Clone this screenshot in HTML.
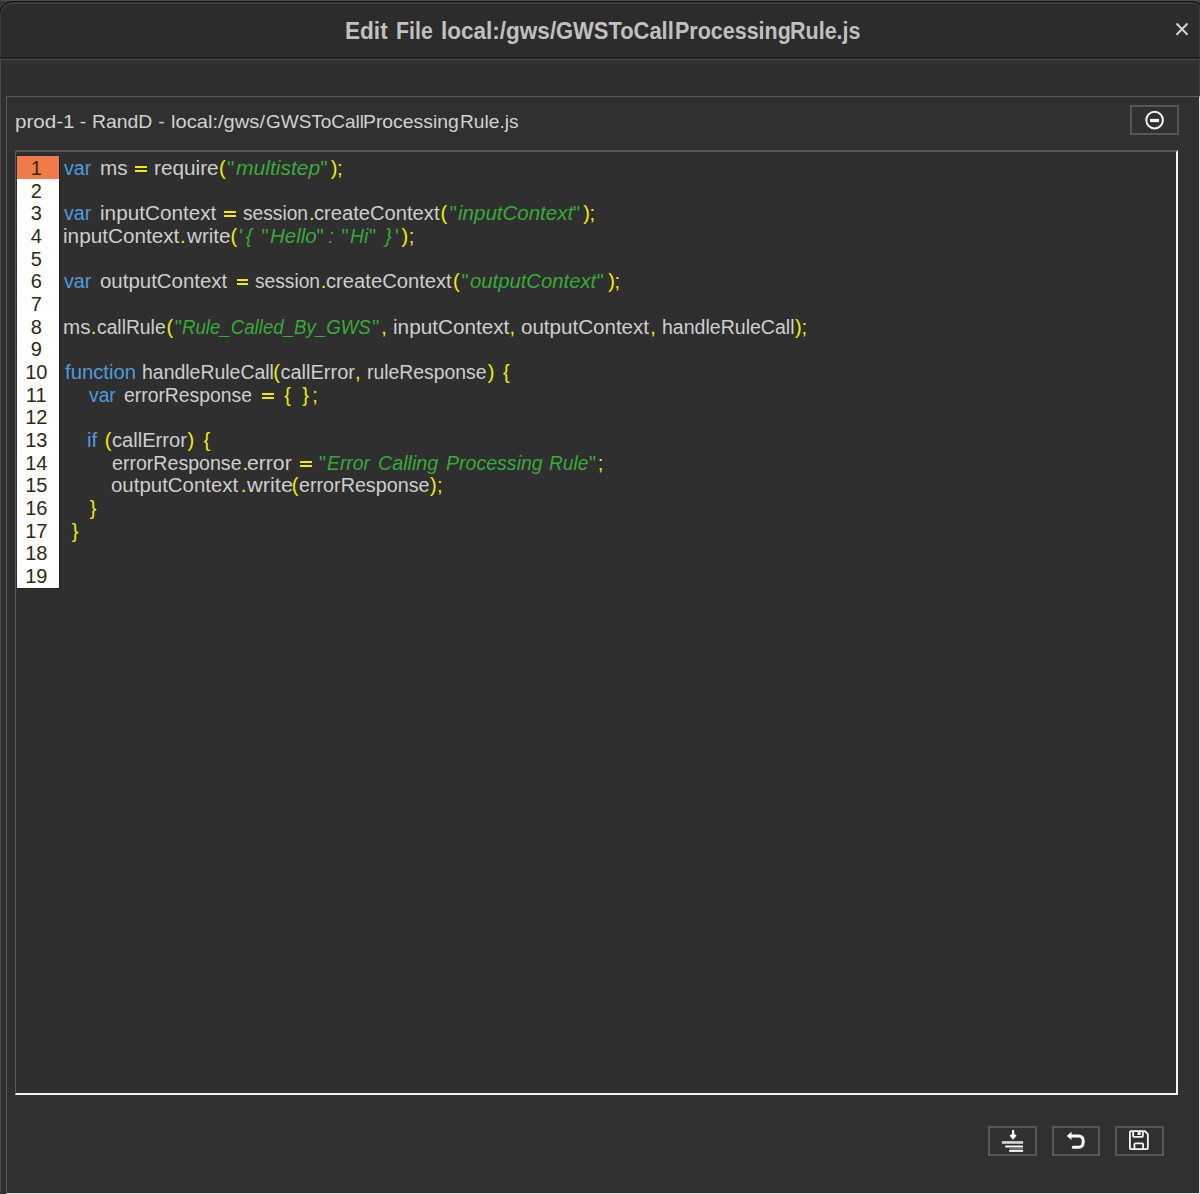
<!DOCTYPE html>
<html><head><meta charset="utf-8">
<style>
html,body{margin:0;padding:0;}
body{width:1200px;height:1194px;overflow:hidden;position:relative;background:#2f2f2f;font-family:"Liberation Sans",sans-serif;}
.abs{position:absolute;}
#cornerfill{left:0;top:0;width:1200px;height:20px;background:#393939;}
#top0{left:0;top:0;width:1200px;height:1px;background:#4c4c4c;}
#win{left:-1px;top:1px;width:1206px;height:1300px;box-sizing:border-box;border:1px solid #0a0a0a;border-radius:13.5px;background:#2c2c2c;box-shadow:inset 1px 2px 0 #3a3a3a;}
#frameL{left:0;top:59px;width:1px;height:1133px;background:#4a4a4a;}
#tb1{left:0;top:57px;width:1200px;height:1px;background:#1c1c1c;}
#tb2{left:0;top:58px;width:1200px;height:1px;background:#2a2a2a;}
#tb3{left:0;top:59px;width:1200px;height:1px;background:#444;}
#tb4{left:0;top:60px;width:1200px;height:1px;background:#363636;}
#toolbar{left:1px;top:61px;width:1199px;height:1133px;background:#2f2f2f;}
#panel{left:6px;top:96px;width:1194px;height:1098px;background:#303030;box-sizing:border-box;border-left:1px solid #5a5a5a;border-top:1px solid #5a5a5a;border-right:1px solid #e0e0e0;border-bottom:1px solid #e0e0e0;}
.btn{box-sizing:border-box;border:2px solid #575757;}
#editor{left:15px;top:150px;width:1163px;height:945px;box-sizing:border-box;border-left:1px solid #5a5a5a;border-top:2px solid #555;border-right:2px solid #f4f4f4;border-bottom:2px solid #f4f4f4;background:#2f2f2f;}
#gutter{left:17px;top:156px;width:42px;height:432px;background:#fff;box-shadow:1px 1px 0 #1f1f1f;}
#gdark{left:17px;top:155px;width:42px;height:1px;background:#1d2a30;}
#hl{left:17px;top:156px;width:42px;height:23px;background:#f07a48;}
.ln{position:absolute;left:17px;width:38.5px;text-align:center;font-size:20px;color:#2e2a10;line-height:40px;}
.tt{position:absolute;font-size:23.3px;font-weight:bold;line-height:50px;white-space:pre;transform-origin:0 0;color:#c0c0c0;}
.ht{position:absolute;font-size:19px;line-height:50px;white-space:pre;transform-origin:0 0;color:#d2d2d2;}
.t{position:absolute;font-size:20px;line-height:40px;white-space:pre;transform-origin:0 0;color:#cecece;}
.eq{position:absolute;height:6px;box-sizing:border-box;border-top:2px solid #f0ee00;border-bottom:2px solid #f0ee00;}
.k{color:#4f9bdc;}
.p{color:#f0ee00;}
.s{color:#38aa38;}
.si{color:#38aa38;font-style:italic;}
</style></head><body>
<div id="cornerfill" class="abs"></div>
<div id="top0" class="abs"></div>
<div id="win" class="abs"></div>
<div id="titlewrap"><span class="tt" style="left:344.83px;top:6px;transform:scaleX(0.9698)">Edit</span><span class="tt" style="left:395.78px;top:6px;transform:scaleX(0.9179)">File</span><span class="tt" style="left:440.73px;top:6px;transform:scaleX(0.9669)">local:/gws/</span><span class="tt" style="left:555.76px;top:6px;transform:scaleX(0.9415)">GWSToCall</span><span class="tt" style="left:674.88px;top:6px;transform:scaleX(0.9220)">Processing</span><span class="tt" style="left:789.88px;top:6px;transform:scaleX(0.9227)">Rule.js</span></div>
<svg class="abs" style="left:1170px;top:17px" width="24" height="24" viewBox="0 0 24 24"><path d="M6.5 6.5 L17.5 17.8 M17.5 6.5 L6.5 17.8" stroke="#d4d4d4" stroke-width="2" fill="none"/></svg>
<div id="tb1" class="abs"></div>
<div id="tb2" class="abs"></div>
<div id="tb3" class="abs"></div>
<div id="tb4" class="abs"></div>
<div id="toolbar" class="abs"></div>
<div id="frameL" class="abs"></div>
<div class="abs" style="left:1199px;top:6px;width:1px;height:51px;background:#3d3d3d"></div>
<div class="abs" style="left:1199px;top:61px;width:1px;height:35px;background:#3d3d3d"></div>
<div id="panel" class="abs"></div>
<div id="hdrwrap"><span class="ht" style="left:14.72px;top:97px;transform:scaleX(1.0849)">prod-1</span><span class="ht" style="left:79.80px;top:97px;transform:scaleX(1.0000)">-</span><span class="ht" style="left:92.28px;top:97px;transform:scaleX(1.0207)">RandD</span><span class="ht" style="left:158.20px;top:97px;transform:scaleX(1.0000)">-</span><span class="ht" style="left:171.44px;top:97px;transform:scaleX(1.0602)">local:/gws/</span><span class="ht" style="left:265.70px;top:97px;transform:scaleX(0.9979)">GWSToCall</span><span class="ht" style="left:363.18px;top:97px;transform:scaleX(1.0185)">Processing</span><span class="ht" style="left:460.24px;top:97px;transform:scaleX(1.0088)">Rule.js</span></div>
<div class="abs btn" style="left:1130px;top:105px;width:49px;height:30px;"></div>
<svg class="abs" style="left:1144px;top:110px" width="22" height="22" viewBox="0 0 22 22"><circle cx="10.6" cy="10.1" r="8.3" stroke="#f0f0f0" stroke-width="2" fill="none"/><rect x="6" y="8.9" width="9.1" height="3.2" fill="#f8f8f8"/></svg>

<div class="abs btn" style="left:988px;top:1126px;width:49px;height:30px;"></div>
<div class="abs btn" style="left:1052px;top:1126px;width:48px;height:30px;"></div>
<div class="abs btn" style="left:1115px;top:1126px;width:49px;height:30px;"></div>
<svg class="abs" style="left:1000px;top:1128px" width="26" height="26" viewBox="0 0 26 26">
<path d="M13.1 3 L13.1 8" stroke="#f6f6f6" stroke-width="2.3" stroke-linecap="round"/>
<path d="M13.1 5.6 L16.7 7.5 L13.1 11.8 L9.5 7.5 Z" fill="#f6f6f6"/>
<rect x="1.8" y="13.1" width="21.3" height="2.7" fill="#d2d2d2"/>
<rect x="5" y="17.6" width="18.1" height="1.8" fill="#f6f6f6" rx="0.9"/>
<rect x="9.5" y="19.4" width="13.6" height="2" fill="#7a7a7a"/>
<rect x="9.1" y="21.9" width="14" height="2" fill="#f6f6f6"/>
</svg>
<svg class="abs" style="left:1062px;top:1128px" width="26" height="26" viewBox="0 0 26 26">
<path d="M4.7 7.9 L9.5 3.8 L9.5 12 Z" fill="#f8f8f8"/>
<path d="M9 7.9 L16.5 7.9 Q21.3 7.9 21.3 13.3 Q21.3 19.3 16.5 19.3 L11.2 19.3" stroke="#f8f8f8" stroke-width="3" fill="none" stroke-linecap="round"/>
</svg>
<svg class="abs" style="left:1126px;top:1128px" width="26" height="26" viewBox="0 0 26 26">
<path d="M5.2 3.15 L18.9 3.15 L21.85 6.1 L21.85 19.9 Q21.85 21.2 20.55 21.2 L5.2 21.2 Q3.9 21.2 3.9 19.9 L3.9 4.45 Q3.9 3.15 5.2 3.15 Z" stroke="#f8f8f8" stroke-width="1.8" fill="none" stroke-linejoin="round"/>
<path d="M7.15 3.4 L7.15 8 Q7.15 8.85 8 8.85 L16 8.85 Q16.85 8.85 16.85 8 L16.85 3.4" stroke="#f8f8f8" stroke-width="1.8" fill="none"/>
<rect x="11.6" y="3.5" width="3" height="3.5" fill="#f8f8f8"/>
<path d="M8.4 21 L8.4 16.2 Q8.4 15.3 9.3 15.3 L16.2 15.3 Q17.1 15.3 17.1 16.2 L17.1 21" stroke="#f8f8f8" stroke-width="1.8" fill="none"/>
</svg>
<div id="editor" class="abs"></div>
<div id="gutter" class="abs"></div>
<div id="gdark" class="abs"></div>
<div id="hl" class="abs"></div>
<div id="lines">
<div class="ln" style="top:148px">1</div>
<div class="ln" style="top:171px">2</div>
<div class="ln" style="top:193px">3</div>
<div class="ln" style="top:216px">4</div>
<div class="ln" style="top:239px">5</div>
<div class="ln" style="top:261px">6</div>
<div class="ln" style="top:284px">7</div>
<div class="ln" style="top:307px">8</div>
<div class="ln" style="top:329px">9</div>
<div class="ln" style="top:352px">10</div>
<div class="ln" style="top:375px">11</div>
<div class="ln" style="top:397px">12</div>
<div class="ln" style="top:420px">13</div>
<div class="ln" style="top:443px">14</div>
<div class="ln" style="top:465px">15</div>
<div class="ln" style="top:488px">16</div>
<div class="ln" style="top:511px">17</div>
<div class="ln" style="top:533px">18</div>
<div class="ln" style="top:556px">19</div>
<span class="t k" style="left:64.20px;top:148px;transform:scaleX(0.9821);">var</span>
<span class="t i" style="left:99.76px;top:148px;transform:scaleX(1.0360);">ms</span>
<div class="eq" style="left:135.00px;top:166px;width:12.00px"></div>
<span class="t i" style="left:153.96px;top:148px;transform:scaleX(1.0377);">require</span>
<span class="t p" style="left:218.90px;top:148px;">(</span>
<span class="t s" style="left:227.25px;top:148px;">&quot;</span>
<span class="t si" style="left:235.80px;top:148px;transform:scaleX(1.0525);">multistep</span>
<span class="t s" style="left:320.60px;top:148px;">&quot;</span>
<span class="t p" style="left:330.75px;top:148px;">)</span>
<span class="t p" style="left:337.00px;top:148px;">;</span>
<span class="t k" style="left:64.20px;top:193px;transform:scaleX(0.9821);">var</span>
<span class="t i" style="left:99.76px;top:193px;transform:scaleX(1.0360);">inputContext</span>
<div class="eq" style="left:224.20px;top:211px;width:11.60px"></div>
<span class="t i" style="left:243.24px;top:193px;transform:scaleX(0.9591);">session</span>
<span class="t p" style="left:309.05px;top:193px;">.</span>
<span class="t i" style="left:313.99px;top:193px;transform:scaleX(1.0081);">createContext</span>
<span class="t p" style="left:440.60px;top:193px;">(</span>
<span class="t s" style="left:449.75px;top:193px;">&quot;</span>
<span class="t si" style="left:458.30px;top:193px;transform:scaleX(1.0257);">inputContext</span>
<span class="t s" style="left:573.10px;top:193px;">&quot;</span>
<span class="t p" style="left:583.25px;top:193px;">)</span>
<span class="t p" style="left:589.50px;top:193px;">;</span>
<span class="t i" style="left:63.16px;top:216px;transform:scaleX(1.0360);">inputContext</span>
<span class="t p" style="left:179.95px;top:216px;">.</span>
<span class="t i" style="left:186.70px;top:216px;transform:scaleX(1.0310);">write</span>
<span class="t p" style="left:230.60px;top:216px;">(</span>
<span class="t s" style="left:239.25px;top:216px;">&#x27;</span>
<span class="t si" style="left:245.85px;top:216px;">{</span>
<span class="t s" style="left:261.40px;top:216px;">&quot;</span>
<span class="t si" style="left:269.78px;top:216px;transform:scaleX(1.0227);">Hello</span>
<span class="t s" style="left:316.40px;top:216px;">&quot;</span>
<span class="t si" style="left:328.25px;top:216px;">:</span>
<span class="t s" style="left:341.40px;top:216px;">&quot;</span>
<span class="t si" style="left:349.83px;top:216px;transform:scaleX(0.9684);">Hi</span>
<span class="t s" style="left:368.90px;top:216px;">&quot;</span>
<span class="t si" style="left:385.34px;top:216px;transform:scaleX(1.0222);">}</span>
<span class="t s" style="left:395.05px;top:216px;">&#x27;</span>
<span class="t p" style="left:401.60px;top:216px;">)</span>
<span class="t p" style="left:408.65px;top:216px;">;</span>
<span class="t k" style="left:64.20px;top:261px;transform:scaleX(0.9821);">var</span>
<span class="t i" style="left:99.78px;top:261px;transform:scaleX(1.0218);">outputContext</span>
<div class="eq" style="left:236.70px;top:279px;width:11.60px"></div>
<span class="t i" style="left:254.84px;top:261px;transform:scaleX(0.9591);">session</span>
<span class="t p" style="left:320.65px;top:261px;">.</span>
<span class="t i" style="left:325.79px;top:261px;transform:scaleX(1.0097);">createContext</span>
<span class="t p" style="left:453.10px;top:261px;">(</span>
<span class="t s" style="left:461.40px;top:261px;">&quot;</span>
<span class="t si" style="left:470.00px;top:261px;transform:scaleX(1.0136);">outputContext</span>
<span class="t s" style="left:596.85px;top:261px;">&quot;</span>
<span class="t p" style="left:608.25px;top:261px;">)</span>
<span class="t p" style="left:614.40px;top:261px;">;</span>
<span class="t i" style="left:63.17px;top:307px;transform:scaleX(1.0320);">ms</span>
<span class="t p" style="left:90.75px;top:307px;">.</span>
<span class="t i" style="left:96.54px;top:307px;transform:scaleX(0.9643);">callRule</span>
<span class="t p" style="left:166.40px;top:307px;">(</span>
<span class="t s" style="left:174.75px;top:307px;">&quot;</span>
<span class="t si" style="left:182.37px;top:307px;transform:scaleX(0.9328);">Rule_Called_By_GWS</span>
<span class="t s" style="left:372.25px;top:307px;">&quot;</span>
<span class="t p" style="left:381.15px;top:307px;">,</span>
<span class="t i" style="left:393.16px;top:307px;transform:scaleX(1.0360);">inputContext</span>
<span class="t p" style="left:509.50px;top:307px;">,</span>
<span class="t i" style="left:521.47px;top:307px;transform:scaleX(1.0282);">outputContext</span>
<span class="t p" style="left:650.35px;top:307px;">,</span>
<span class="t i" style="left:662.32px;top:307px;transform:scaleX(0.9769);">handleRuleCall</span>
<span class="t p" style="left:794.90px;top:307px;">)</span>
<span class="t p" style="left:801.60px;top:307px;">;</span>
<span class="t k" style="left:65.00px;top:352px;transform:scaleX(1.0145);">function</span>
<span class="t i" style="left:142.33px;top:352px;transform:scaleX(0.9724);">handleRuleCall</span>
<span class="t p" style="left:273.25px;top:352px;">(</span>
<span class="t i" style="left:280.50px;top:352px;">callError</span>
<span class="t p" style="left:355.05px;top:352px;">,</span>
<span class="t i" style="left:367.13px;top:352px;transform:scaleX(0.9689);">ruleResponse</span>
<span class="t p" style="left:487.75px;top:352px;">)</span>
<span class="t p" style="left:503.00px;top:352px;">{</span>
<span class="t k" style="left:89.00px;top:375px;transform:scaleX(0.9643);">var</span>
<span class="t i" style="left:124.03px;top:375px;transform:scaleX(0.9672);">errorResponse</span>
<div class="eq" style="left:262.40px;top:393px;width:11.20px"></div>
<span class="t p" style="left:284.18px;top:375px;">{</span>
<span class="t p" style="left:302.18px;top:375px;">}</span>
<span class="t p" style="left:312.25px;top:375px;">;</span>
<span class="t k" style="left:87.28px;top:420px;transform:scaleX(1.0222);">if</span>
<span class="t p" style="left:104.75px;top:420px;">(</span>
<span class="t i" style="left:112.29px;top:420px;transform:scaleX(1.0055);">callError</span>
<span class="t p" style="left:187.40px;top:420px;">)</span>
<span class="t p" style="left:203.55px;top:420px;">{</span>
<span class="t i" style="left:111.52px;top:443px;transform:scaleX(0.9794);">errorResponse</span>
<span class="t p" style="left:242.45px;top:443px;">.</span>
<span class="t i" style="left:247.24px;top:443px;transform:scaleX(1.0585);">error</span>
<div class="eq" style="left:300.00px;top:461px;width:11.70px"></div>
<span class="t s" style="left:318.90px;top:443px;">&quot;</span>
<span class="t si" style="left:326.53px;top:443px;transform:scaleX(0.9659);">Error</span>
<span class="t si" style="left:378.21px;top:443px;transform:scaleX(0.9850);">Calling</span>
<span class="t si" style="left:445.72px;top:443px;transform:scaleX(0.9776);">Processing</span>
<span class="t si" style="left:549.04px;top:443px;transform:scaleX(0.9575);">Rule</span>
<span class="t s" style="left:588.90px;top:443px;">&quot;</span>
<span class="t p" style="left:597.85px;top:443px;">;</span>
<span class="t i" style="left:111.48px;top:465px;transform:scaleX(1.0218);">outputContext</span>
<span class="t p" style="left:240.75px;top:465px;">.</span>
<span class="t i" style="left:246.70px;top:465px;transform:scaleX(1.0905);">write</span>
<span class="t p" style="left:291.85px;top:465px;">(</span>
<span class="t i" style="left:299.01px;top:465px;transform:scaleX(0.9863);">errorResponse</span>
<span class="t p" style="left:429.90px;top:465px;">)</span>
<span class="t p" style="left:437.00px;top:465px;">;</span>
<span class="t p" style="left:89.80px;top:488px;">}</span>
<span class="t p" style="left:71.70px;top:511px;">}</span>
</div>
</body></html>
